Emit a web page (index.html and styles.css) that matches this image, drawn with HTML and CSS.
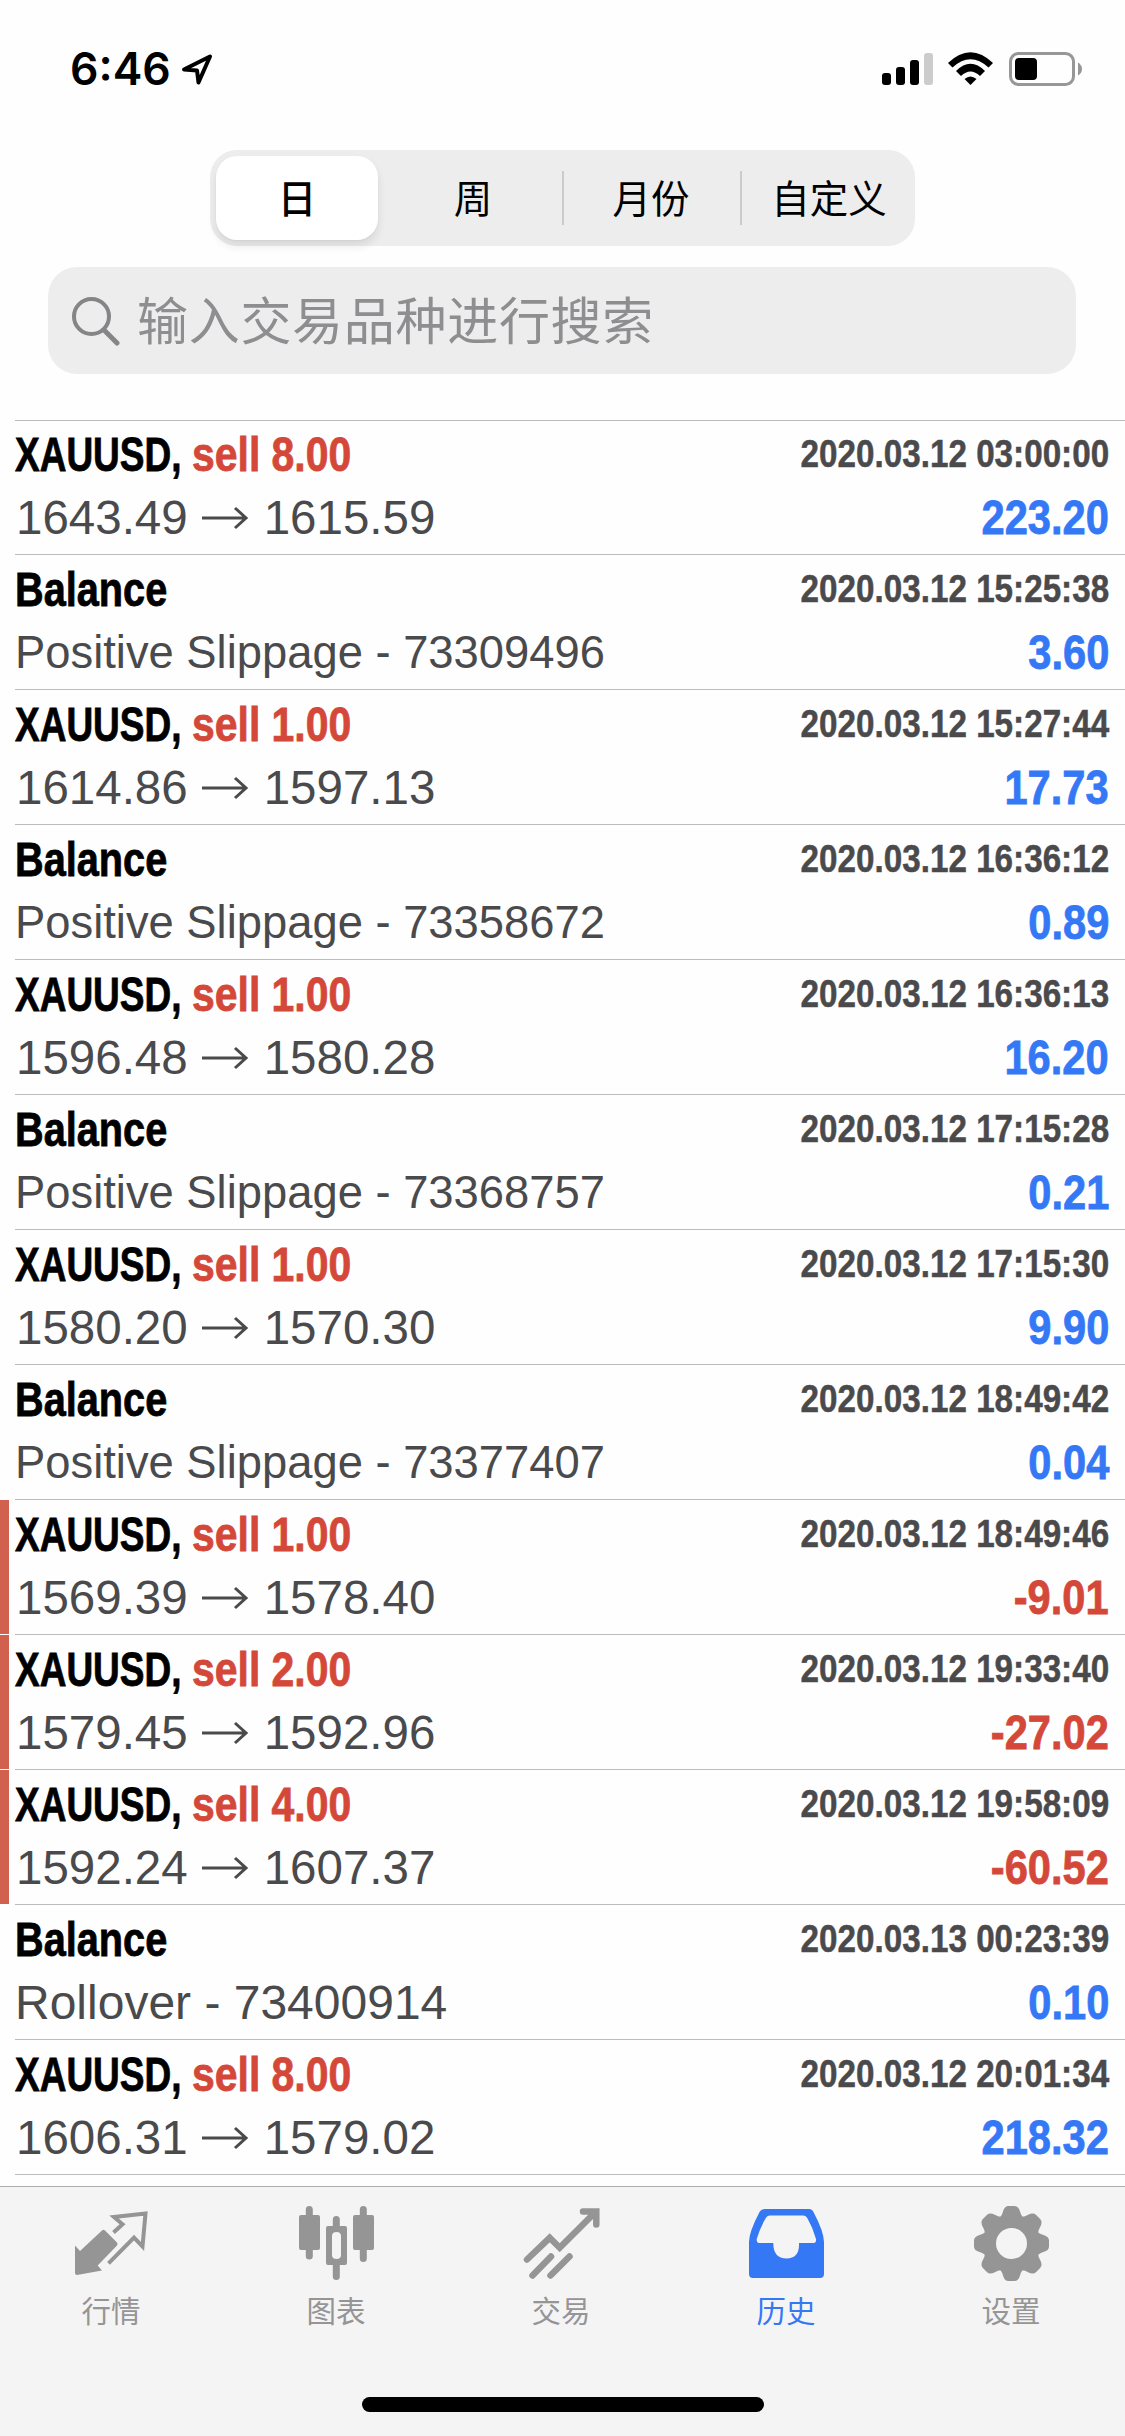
FILE: index.html
```html
<!DOCTYPE html>
<html lang="zh-CN">
<head>
<meta charset="utf-8">
<title>历史</title>
<link rel="stylesheet" href="styles.css">
</head>
<body>
<div class="screen">
  <header class="status">
    <span class="time">6:46</span>
    <svg class="locate" width="34" height="34" viewBox="0 0 34 34"><path d="M4 17.5 30 4.500 18.500 30.500 17 18.500Z"/></svg>
    <svg class="system" width="204" height="40" viewBox="0 0 204 40">
      <g><rect x="2" y="23" width="9" height="12" rx="3"/><rect x="16" y="17" width="9" height="18" rx="3"/><rect x="30" y="10" width="9" height="25" rx="3"/><rect class="dim" x="44" y="3" width="9" height="32" rx="3"/></g>
      <path d="M68 13Q90.500-8.500 113 13L108.500 17.500Q90.500 1 72.500 17.500Z"/>
      <path d="M76 21Q90.500 6.500 105 21L100 26Q90.500 17 81 26Z"/>
      <path d="M84.500 29Q90.500 24 96.500 29L90.500 35Z"/>
      <rect class="case" x="130.500" y="3.500" width="63" height="31" rx="8"/>
      <rect x="135" y="8" width="22" height="22" rx="4"/>
      <path class="tip" d="M198 12.500Q202 15 202 19T198 25.500Z"/>
    </svg>
  </header>

  <nav class="periods">
    <span class="period active">日</span>
    <span class="period">周</span>
    <span class="period divided">月份</span>
    <span class="period divided">自定义</span>
  </nav>

  <div class="search">
    <svg width="50" height="50" viewBox="0 0 50 50"><circle cx="20.500" cy="20.500" r="17.500"/><path d="M33 34 46 47"/></svg>
    <span>输入交易品种进行搜索</span>
  </div>

  <main class="deals">
    <article class="deal"><i class="mark"></i><div class="body">
      <div class="top"><b class="symbol">XAUUSD,</b><b class="side">sell 8.00</b><time>2020.03.12 03:00:00</time></div>
      <div class="bottom"><span class="price">1643.49<svg class="arrow" width="48" height="24"><path d="M0 12H44M33 2 44 12 33 22"/></svg>1615.59</span><b class="amount">223.20</b></div></div></article>
    <article class="deal"><i class="mark"></i><div class="body">
      <div class="top"><b class="balance">Balance</b><time>2020.03.12 15:25:38</time></div>
      <div class="bottom"><span class="note">Positive Slippage - 73309496</span><b class="amount">3.60</b></div></div></article>
    <article class="deal"><i class="mark"></i><div class="body">
      <div class="top"><b class="symbol">XAUUSD,</b><b class="side">sell 1.00</b><time>2020.03.12 15:27:44</time></div>
      <div class="bottom"><span class="price">1614.86<svg class="arrow" width="48" height="24"><path d="M0 12H44M33 2 44 12 33 22"/></svg>1597.13</span><b class="amount">17.73</b></div></div></article>
    <article class="deal"><i class="mark"></i><div class="body">
      <div class="top"><b class="balance">Balance</b><time>2020.03.12 16:36:12</time></div>
      <div class="bottom"><span class="note">Positive Slippage - 73358672</span><b class="amount">0.89</b></div></div></article>
    <article class="deal"><i class="mark"></i><div class="body">
      <div class="top"><b class="symbol">XAUUSD,</b><b class="side">sell 1.00</b><time>2020.03.12 16:36:13</time></div>
      <div class="bottom"><span class="price">1596.48<svg class="arrow" width="48" height="24"><path d="M0 12H44M33 2 44 12 33 22"/></svg>1580.28</span><b class="amount">16.20</b></div></div></article>
    <article class="deal"><i class="mark"></i><div class="body">
      <div class="top"><b class="balance">Balance</b><time>2020.03.12 17:15:28</time></div>
      <div class="bottom"><span class="note">Positive Slippage - 73368757</span><b class="amount">0.21</b></div></div></article>
    <article class="deal"><i class="mark"></i><div class="body">
      <div class="top"><b class="symbol">XAUUSD,</b><b class="side">sell 1.00</b><time>2020.03.12 17:15:30</time></div>
      <div class="bottom"><span class="price">1580.20<svg class="arrow" width="48" height="24"><path d="M0 12H44M33 2 44 12 33 22"/></svg>1570.30</span><b class="amount">9.90</b></div></div></article>
    <article class="deal"><i class="mark"></i><div class="body">
      <div class="top"><b class="balance">Balance</b><time>2020.03.12 18:49:42</time></div>
      <div class="bottom"><span class="note">Positive Slippage - 73377407</span><b class="amount">0.04</b></div></div></article>
    <article class="deal loss"><i class="mark"></i><div class="body">
      <div class="top"><b class="symbol">XAUUSD,</b><b class="side">sell 1.00</b><time>2020.03.12 18:49:46</time></div>
      <div class="bottom"><span class="price">1569.39<svg class="arrow" width="48" height="24"><path d="M0 12H44M33 2 44 12 33 22"/></svg>1578.40</span><b class="amount">-9.01</b></div></div></article>
    <article class="deal loss"><i class="mark"></i><div class="body">
      <div class="top"><b class="symbol">XAUUSD,</b><b class="side">sell 2.00</b><time>2020.03.12 19:33:40</time></div>
      <div class="bottom"><span class="price">1579.45<svg class="arrow" width="48" height="24"><path d="M0 12H44M33 2 44 12 33 22"/></svg>1592.96</span><b class="amount">-27.02</b></div></div></article>
    <article class="deal loss"><i class="mark"></i><div class="body">
      <div class="top"><b class="symbol">XAUUSD,</b><b class="side">sell 4.00</b><time>2020.03.12 19:58:09</time></div>
      <div class="bottom"><span class="price">1592.24<svg class="arrow" width="48" height="24"><path d="M0 12H44M33 2 44 12 33 22"/></svg>1607.37</span><b class="amount">-60.52</b></div></div></article>
    <article class="deal"><i class="mark"></i><div class="body">
      <div class="top"><b class="balance">Balance</b><time>2020.03.13 00:23:39</time></div>
      <div class="bottom"><span class="note short">Rollover - 73400914</span><b class="amount">0.10</b></div></div></article>
    <article class="deal"><i class="mark"></i><div class="body">
      <div class="top"><b class="symbol">XAUUSD,</b><b class="side">sell 8.00</b><time>2020.03.12 20:01:34</time></div>
      <div class="bottom"><span class="price">1606.31<svg class="arrow" width="48" height="24"><path d="M0 12H44M33 2 44 12 33 22"/></svg>1579.02</span><b class="amount">218.32</b></div></div></article>
    <div class="deal last"><i class="mark"></i><div class="body"></div></div>
  </main>

  <footer class="tabbar">
    <nav class="tabs">
      <a class="tab"><svg width="81" height="80" viewBox="0 0 81 80">
        <path d="M3 42.500 8 48 30 27.500Q31.500 26 33 27.500L45 39.500Q46 41 45 42.500L25.700 62.500 30 67.500 5 72Q3 72 3 70Z"/>
        <path class="line thin" d="M41.500 29.500 50.500 21.300 42 14 73.500 10.500 70.500 43.500 62 34.700 36.500 60.300"/></svg><span>行情</span></a>
      <a class="tab"><svg width="81" height="80" viewBox="0 0 81 80">
        <path class="line wick" d="M12.300 6.500V53M66.300 6.500V55.500M39.300 16.500V25M39.300 60V73.500"/>
        <rect x="2" y="12" width="21" height="35" rx="2"/><rect x="56" y="12" width="21" height="35" rx="2"/>
        <path fill-rule="evenodd" d="M31 23H48Q50 23 50 25V60Q50 62 48 62H31Q29 62 29 60V25Q29 23 31 23ZM39.500 29Q35 29 35 33V52Q35 56 39.500 56T44 52V33Q44 29 39.500 29Z"/></svg><span>图表</span></a>
      <a class="tab"><svg width="81" height="80" viewBox="0 0 81 80">
        <path class="line" d="M5 56.500 27.700 34.800 37.700 44.700 73 9.500M61 8.500H74.300V21.500"/>
        <path class="line" d="M10.500 72.500 29 53.500M28.500 72.500 47.500 53.500"/></svg><span>交易</span></a>
      <a class="tab current"><svg width="81" height="80" viewBox="0 0 81 80">
        <path fill-rule="evenodd" d="M18 6H62Q65 6 66.500 9Q77 29 77 39V71Q77 75 73 75H6Q2 75 2 71V39Q2 29 12.500 9Q14 6 18 6ZM23 12.500Q20 12.500 18.500 15.500Q13 25 9.700 36Q9.500 40 12 40H26.300Q26.300 55.500 39.500 55.500T52 40H66.500Q69.500 40 69 36Q66 25 60.500 15.500Q59 12.500 56 12.500Z"/></svg><span>历史</span></a>
      <a class="tab"><svg width="81" height="80" viewBox="0 0 81 80">
        <g transform="translate(39.500 40.500)"><path id="t" d="M-14-25Q-10-26-8.500-32Q-7-37.500-3-37.500H3Q7-37.500 8.500-32Q10-26 14-25V25Q10 26 8.500 32Q7 37.500 3 37.500H-3Q-7 37.500-8.500 32Q-10 26-14 25Z"/><use href="#t" transform="rotate(45)"/><use href="#t" transform="rotate(90)"/><use href="#t" transform="rotate(135)"/><circle class="hole" r="15.500"/></g></svg><span>设置</span></a>
    </nav>
    <div class="home"></div>
  </footer>
</div>
</body>
</html>
```
FILE: styles.css
```css
* { box-sizing: border-box; }
body { margin: 0; background: #fefefe; }
.screen {
  width: 1125px; height: 2436px; overflow: hidden;
  display: flex; flex-direction: column;
  font-family: "Liberation Sans", "Noto Sans CJK SC", sans-serif;
}

.status { height: 150px; flex: none; display: flex; align-items: flex-start; padding: 50px 41px 0 70px; }
.time { font: 600 44.5px/38px Inter, sans-serif; width: 110px; }
.locate { margin-top: 2px; fill: none; stroke: #000; stroke-width: 4; stroke-linejoin: round; }
.system { margin-left: auto; }
.dim { fill: #ccc; }
.case { fill: none; stroke: #979797; stroke-width: 3; }
.tip { fill: #979797; }

.periods {
  width: 705px; height: 96px; flex: none; margin-left: 210px; padding: 6px 0 6px 6px;
  display: flex; border-radius: 27px; background: #ededee;
}
.period {
  width: 178px; flex: none; display: flex; align-items: center; justify-content: center;
  font: 400 38.5px/80px "Noto Sans CJK SC", sans-serif; padding-bottom: 4px;
}
.period.active { width: 162px; margin-right: 6px; border-radius: 21px; background: #fff; font-weight: 500; box-shadow: 0 6px 10px rgba(0,0,0,.09), 0 1px 2px rgba(0,0,0,.04); }
.divided { background: linear-gradient(#cbcbcd, #cbcbcd) left center / 2px 54px no-repeat; }

.search {
  width: 1028px; height: 107px; flex: none; margin: 21px 0 0 48px; padding-left: 22px;
  display: flex; align-items: center; border-radius: 29px; background: #ededee;
  color: #8e8e91; font: 400 51px/75px "Noto Sans CJK SC", sans-serif; letter-spacing: .7px;
}
.search svg { margin: 0 16px 0 1px; fill: none; stroke: #858588; stroke-width: 4; stroke-linecap: round; }
.search path { stroke-width: 5; }
.search span { padding-bottom: 5px; }

.deals { height: 1766px; flex: none; margin-top: 46px; }
.deal { height: 135px; display: flex; gap: 6px; }
.deal:first-child { height: 134px; }
.deal.last { height: 1px; }
.mark { width: 9px; margin-top: 1px; }
.loss .mark { background: #d2604f; }
.body { flex: 1; border-top: 1px solid #bcbcbe; padding-right: 16px; }
.top { height: 67px; padding-top: 1px; display: flex; line-height: 66px; font-size: 49px; white-space: nowrap; }
.deal:first-child .top { height: 66px; padding-top: 0; }
.top b, .amount { -webkit-text-stroke: .8px; }
.symbol, .side, .balance { transform-origin: left; }
.symbol { width: 177px; transform: scaleX(.755); }
.side { width: 160px; color: #d4483a; transform: scaleX(.835); }
.balance { transform: scaleX(.81); }
time { margin-left: auto; font-size: 39px; font-weight: 700; line-height: 65px; color: #4a4a4c; transform: scaleX(.852); transform-origin: right; -webkit-text-stroke: .5px; }
.bottom { display: flex; justify-content: space-between; line-height: 61px; font-size: 48px; white-space: nowrap; color: #4a4a4c; }
.price { display: flex; align-items: center; font-size: 47.500px; padding-left: 1px; }
.arrow { margin: 0 14px; fill: none; stroke: #4a4a4c; stroke-width: 3; }
.note { font-size: 45.350px; }
.note.short { font-size: 48px; }
.amount { font-size: 49px; color: #3478f6; transform: scaleX(.85); transform-origin: right; }
.loss .amount { color: #d4483a; }

.tabbar { flex: 1; display: flex; flex-direction: column; border-top: 1px solid #adadaf; background: #f4f4f5; }
.tabs { display: flex; padding-top: 16px; }
.tab { width: 225px; display: flex; flex-direction: column; align-items: center; color: #959595; fill: #959595; font: 400 29.5px/44px "Noto Sans CJK SC", sans-serif; }
.tab svg { margin-bottom: 4px; }
.tab span { padding-right: 3px; }
.current { color: #3478f6; fill: #3478f6; }
.line { fill: none; stroke: #959595; stroke-width: 6.500; stroke-linecap: round; stroke-linejoin: miter; }
.thin { stroke-width: 4; stroke-linecap: butt; }
.wick { stroke-width: 7; }
.hole { fill: #f4f4f5; }
.home { width: 402px; height: 15px; margin: 66px 0 0 362px; border-radius: 8px; background: #000; }
```
